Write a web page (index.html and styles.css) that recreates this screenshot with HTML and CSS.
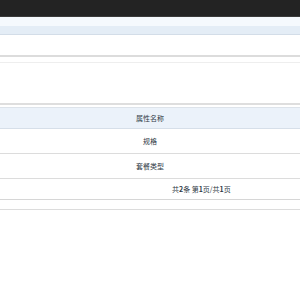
FILE: index.html
```html
<!DOCTYPE html>
<html lang="zh-CN">
  <head>
    <meta charset="UTF-8" />
    <meta name="viewport" content="width=device-width, initial-scale=1.0" />
    <link rel="stylesheet" href="styles.css">
  </head>
  <body>
    <div class="topbar"></div>
    <div class="tabs">
      <div class="tabs-top"></div>
      <div class="tabs-bottom"></div>
    </div>
    <div class="search"></div>
    <div class="toolbar"></div>
    <div class="grid">
      <table>
        <thead>
          <tr><th>属性名称</th></tr>
        </thead>
        <tbody>
          <tr><td>规格</td></tr>
          <tr><td>套餐类型</td></tr>
        </tbody>
      </table>
      <div class="pager">共<b>2</b>条 第<b>1</b>页/共<b>1</b>页</div>
      <div class="pager-foot"></div>
    </div>
  </body>
</html>
```

FILE: styles.css
```css
html,
body {
  margin: 0;
  padding: 0;
  background: #fff;
  font-family: "Noto Sans CJK SC", "Liberation Sans", sans-serif;
  font-size: 7px;
  color: #2f3a46;
}

/* Top bar */

.topbar {
  height: 16px;
  background: #232323;
  border-bottom: 1px solid #3a3a3a;
}

/* Tabs strip */

.tabs {
  border-bottom: 1px solid #d3dde8;
}

.tabs-top {
  height: 9px;
  background: #f5f9fd;
}

.tabs-bottom {
  height: 8px;
  background: #e4edf6;
}

/* Search area */

.search {
  height: 20px;
  border-bottom: 2px solid #dcdcdc;
}

.toolbar {
  height: 5px;
  border-bottom: 1px solid #eeeeee;
  margin-bottom: 40px;
}

/* Grid */

.grid {
  border-top: 2px solid #dedede;
  padding-top: 2px;
}

table {
  width: 100%;
  border-collapse: collapse;
  border-top: 1px solid #dde3ea;
}

th,
td {
  text-align: center;
  font-weight: normal;
  padding: 0;
}

th {
  height: 20px;
  background: #ebf2fa;
  border-bottom: 1px solid #d6dfe9;
}

td {
  height: 24px;
  border-bottom: 1px solid #dcdcdc;
}

.pager {
  height: 20px;
  line-height: 20px;
  padding-left: 172px;
  border-bottom: 1px solid #d6d6d6;
}

.pager b {
  font-weight: bold;
}

.pager-foot {
  height: 9px;
  border-bottom: 1px solid #dcdcdc;
}
```
